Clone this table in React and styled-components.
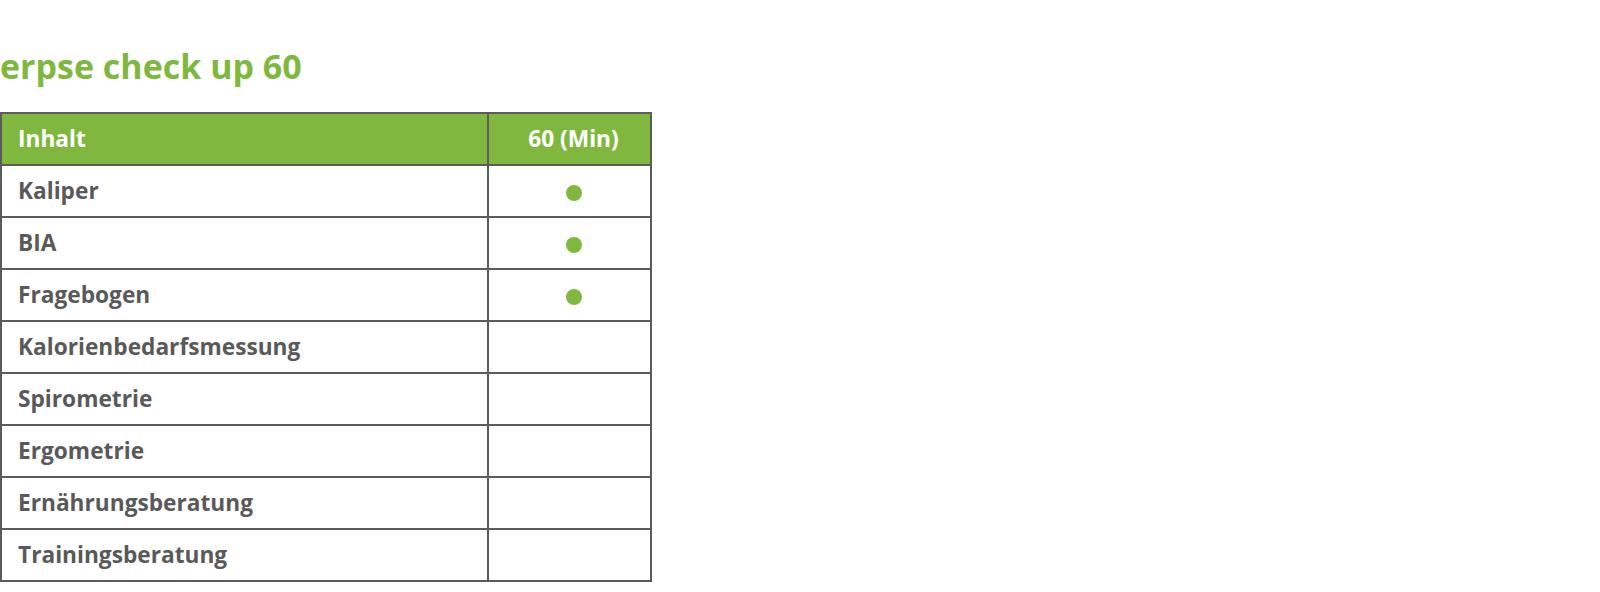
import React from "react";
import styled, { createGlobalStyle } from "styled-components";

const Global = createGlobalStyle`
  html, body { margin: 0; padding: 0; background: #fff; }
  body { font-family: "Open Sans", "Liberation Sans", sans-serif; }
`;

const Page = styled.div`
  width: 1600px;
  height: 592px;
  padding-top: 41px;
  box-sizing: border-box;
  overflow: hidden;
`;

const Title = styled.h2`
  margin: 0 0 21px 0;
  font-size: 34px;
  line-height: 50px;
  font-weight: 700;
  color: #7fb83e;
`;

const Table = styled.table`
  border-collapse: separate;
  border-spacing: 0;
  table-layout: fixed;
  width: 652px;
  border-top: 2px solid #5b5b5b;
  border-left: 2px solid #5b5b5b;
`;

const Cell = styled.td`
  box-sizing: border-box;
  height: 52px;
  border-right: 2px solid #5b5b5b;
  border-bottom: 2px solid #5b5b5b;
  padding: 0 0 0 ${(p) => (p.$center ? "8px" : "16px")};
  font-size: 22.7px;
  font-weight: 700;
  text-align: ${(p) => (p.$center ? "center" : "left")};
  background: ${(p) => (p.$head ? "#80b83f" : "#fff")};
  color: ${(p) => (p.$head ? "#ffffff" : "#595959")};
  vertical-align: middle;
  line-height: 1;
`;

const Dot = styled.span`
  display: inline-block;
  width: 16px;
  height: 16px;
  border-radius: 50%;
  background: #80b83f;
  vertical-align: middle;
`;

const rows = [
  ["Kaliper", true],
  ["BIA", true],
  ["Fragebogen", true],
  ["Kalorienbedarfsmessung", false],
  ["Spirometrie", false],
  ["Ergometrie", false],
  ["Ernährungsberatung", false],
  ["Trainingsberatung", false],
];

export default function App() {
  return (
    <Page>
      <Global />
      <Title>erpse check up 60</Title>
      <Table>
        <colgroup>
          <col style={{ width: "487px" }} />
          <col style={{ width: "163px" }} />
        </colgroup>
        <thead>
          <tr>
            <Cell as="th" $head>Inhalt</Cell>
            <Cell as="th" $head $center>60 (Min)</Cell>
          </tr>
        </thead>
        <tbody>
          {rows.map(([name, on]) => (
            <tr key={name}>
              <Cell>{name}</Cell>
              <Cell $center>{on && <Dot />}</Cell>
            </tr>
          ))}
        </tbody>
      </Table>
    </Page>
  );
}
